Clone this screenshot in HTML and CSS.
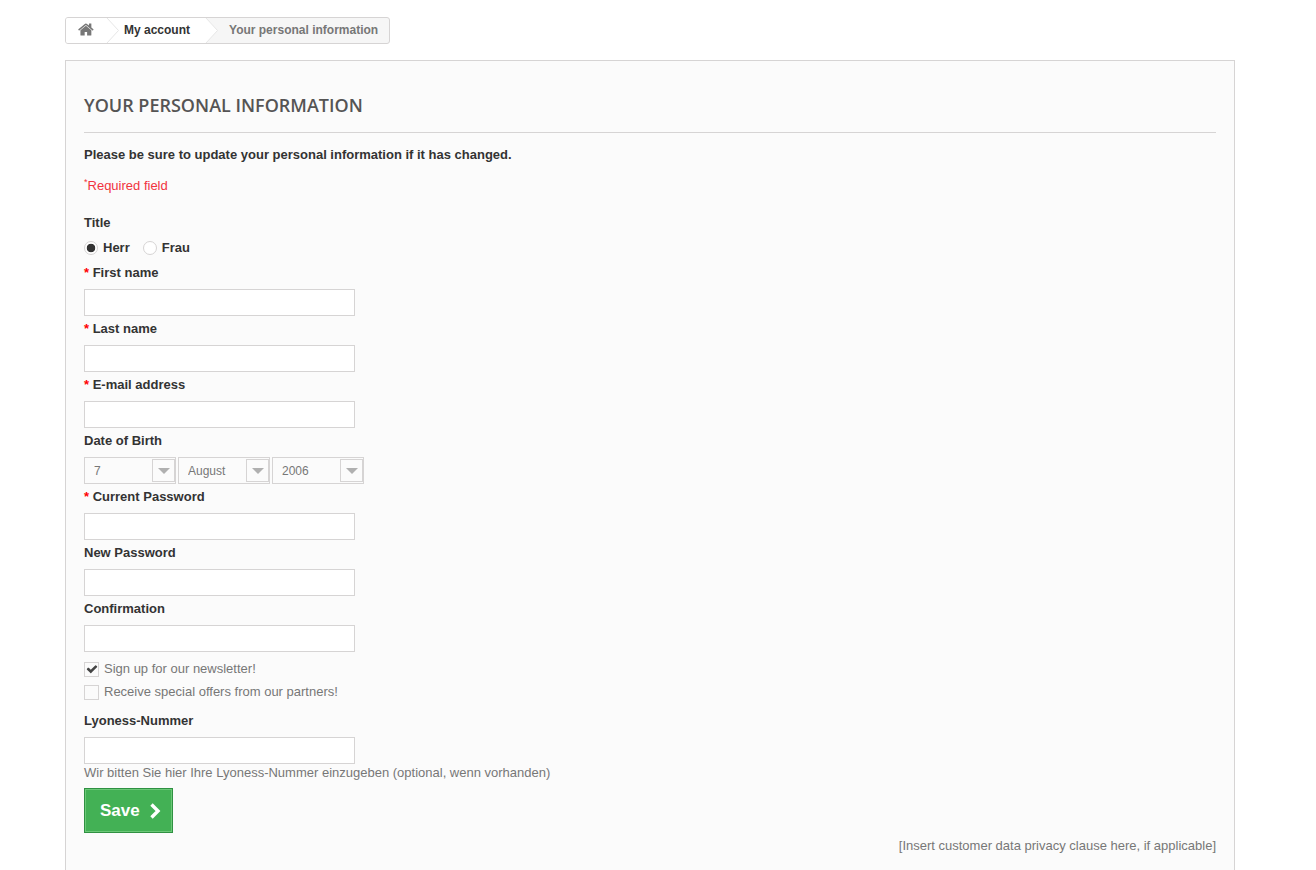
FILE: index.html
```html
<!DOCTYPE html>
<html lang="en">
<head>
    <meta charset="UTF-8">
    <title>Your personal information</title>
    <link rel="stylesheet" href="styles.css">
</head>
<body>
    <div class="page">

        <!-- Breadcrumb -->
        <nav class="breadcrumb">
            <a class="crumb crumb-home" href="#">
                <svg class="home-icon" viewBox="0 0 1792 1792"><path d="M1408 992v480q0 26-19 45t-45 19h-384v-384h-256v384h-384q-26 0-45-19t-19-45v-480q0-1 .5-3t.5-3l575-474 575 474q1 2 1 6zm223-69l-62 74q-8 9-21 11h-3q-13 0-21-7l-692-577-692 577q-12 8-24 7-13-2-21-11l-62-74q-8-10-7-23.5t11-20.5l719-599q32-26 76-26t76 26l244 204v-195q0-14 9-23t23-9h192q14 0 23 9t9 23v408l219 182q10 8 11 20.5t-7 23.5z"/></svg>
            </a>
            <svg class="crumb-sep" viewBox="0 0 13 25"><polygon points="0,0 1,0 12.5,12.5 1,25 0,25" fill="#fff"/><polyline points="1,0 12.5,12.5 1,25" fill="none" stroke="#e6e6e6"/></svg>
            <a class="crumb crumb-link" href="#">My account</a>
            <svg class="crumb-sep sep-last" viewBox="0 0 13 25"><polygon points="0,0 1,0 12.5,12.5 1,25 0,25" fill="#fff"/><polyline points="1,0 12.5,12.5 1,25" fill="none" stroke="#e6e6e6"/></svg>
            <span class="crumb crumb-current">Your personal information</span>
        </nav>

        <!-- Main box -->
        <div class="box">
            <h1 class="page-heading">Your personal information</h1>
            <p class="intro">Please be sure to update your personal information if it has changed.</p>
            <p class="required-note"><sup>*</sup>Required field</p>

            <form class="account-form">
                <div class="title-group">
                    <div class="field-label">Title</div>
                    <div class="radio-row">
                        <label class="radio-option"><span class="radio checked"></span>Herr</label>
                        <label class="radio-option"><span class="radio"></span>Frau</label>
                    </div>
                </div>

                <div class="form-group">
                    <label class="field-label"><span class="req">*</span> First name</label>
                    <input class="text-input" type="text">
                </div>
                <div class="form-group">
                    <label class="field-label"><span class="req">*</span> Last name</label>
                    <input class="text-input" type="text">
                </div>
                <div class="form-group">
                    <label class="field-label"><span class="req">*</span> E-mail address</label>
                    <input class="text-input" type="text">
                </div>

                <div class="form-group">
                    <label class="field-label">Date of Birth</label>
                    <div class="date-row">
                        <div class="select-wrap">
                            <select class="select-input"><option>7</option></select>
                            <span class="select-arrow"></span>
                        </div>
                        <div class="select-wrap">
                            <select class="select-input"><option>August</option></select>
                            <span class="select-arrow"></span>
                        </div>
                        <div class="select-wrap">
                            <select class="select-input"><option>2006</option></select>
                            <span class="select-arrow"></span>
                        </div>
                    </div>
                </div>

                <div class="form-group">
                    <label class="field-label"><span class="req">*</span> Current Password</label>
                    <input class="text-input" type="password">
                </div>
                <div class="form-group">
                    <label class="field-label">New Password</label>
                    <input class="text-input" type="password">
                </div>
                <div class="form-group">
                    <label class="field-label">Confirmation</label>
                    <input class="text-input" type="password">
                </div>

                <div class="check-list">
                    <label class="check-row">
                        <span class="checkbox">
                            <svg class="check-icon" viewBox="0 0 1792 1792"><path d="M1671 566q0 40-28 68l-724 724-136 136q-28 28-68 28t-68-28l-136-136-362-362q-28-28-28-68t28-68l136-136q28-28 68-28t68 28l294 295 656-657q28-28 68-28t68 28l136 136q28 28 28 68z"/></svg>
                        </span>
                        Sign up for our newsletter!
                    </label>
                    <label class="check-row"><span class="checkbox"></span>Receive special offers from our partners!</label>
                </div>

                <div class="form-group lyoness">
                    <label class="field-label">Lyoness-Nummer</label>
                    <input class="text-input" type="text">
                    <div class="help-text">Wir bitten Sie hier Ihre Lyoness-Nummer einzugeben (optional, wenn vorhanden)</div>
                </div>

                <button class="btn-save" type="button">
                    Save
                    <svg class="btn-chevron" viewBox="0 0 12 18"><polyline points="2.5,2.5 9,9 2.5,15.5" fill="none" stroke="#fff" stroke-width="3.4"/></svg>
                </button>

                <p class="privacy">[Insert customer data privacy clause here, if applicable]</p>
            </form>
        </div>
    </div>
</body>
</html>
```

FILE: styles.css
```css
/* General Styling */
html, body {
    height: 870px;
    overflow: hidden;
}

body {
    font-family: "Liberation Sans", Arial, sans-serif;
    font-size: 13px;
    color: #777;
    background-color: #fff;
    margin: 0;
    padding: 0;
}

.page {
    width: 1170px;
    margin-left: 65px;
    padding-top: 17px;
}

/* Breadcrumb */
.breadcrumb {
    display: inline-flex;
    align-items: stretch;
    height: 25px;
    border: 1px solid #d6d4d4;
    border-radius: 3px;
    background-color: #f6f6f6;
    font-size: 12px;
    font-weight: bold;
    line-height: 25px;
    overflow: hidden;
}

.crumb {
    display: block;
    text-decoration: none;
}

.crumb-home {
    display: flex;
    align-items: center;
    width: 40px;
    padding-left: 12px;
    box-sizing: border-box;
    background-color: #fff;
}

.home-icon {
    width: 17px;
    height: 17px;
    margin-top: -3px;
    fill: #777;
}

.crumb-sep {
    width: 13px;
    height: 25px;
    background-color: #fff;
}

.sep-last {
    background-color: #f6f6f6;
}

.crumb-link {
    padding: 0 15px 0 5px;
    color: #333;
    background-color: #fff;
}

.crumb-current {
    padding: 0 11px 0 11px;
    color: #777;
}

/* Main box */
.box {
    box-sizing: border-box;
    height: 810px;
    margin-top: 16px;
    padding: 0 18px;
    background-color: #fbfbfb;
    border: 1px solid #d6d4d4;
    border-bottom: none;
}

.page-heading {
    margin: 0 0 13px;
    padding: 33px 0 15px;
    font-family: "Open Sans", sans-serif;
    font-size: 18px;
    font-weight: 600;
    line-height: 23px;
    text-transform: uppercase;
    color: #555454;
    border-bottom: 1px solid #d6d4d4;
}

.intro {
    margin: 0 0 13px;
    font-weight: bold;
    line-height: 18px;
    color: #333;
}

.required-note {
    margin: 0 0 19px;
    line-height: 18px;
    color: #f13340;
}

.required-note sup {
    font-size: 9px;
    line-height: 0;
}

/* Form */
.field-label {
    display: block;
    font-weight: bold;
    line-height: 18px;
    color: #333;
}

.req {
    color: #f00;
}

.title-group {
    margin-bottom: 7px;
}

.radio-row {
    display: flex;
    gap: 13px;
    margin-top: 7px;
}

.radio-option {
    display: flex;
    align-items: center;
    gap: 5px;
    font-weight: bold;
    line-height: 18px;
    color: #333;
}

.radio {
    box-sizing: border-box;
    width: 14px;
    height: 14px;
    border: 1px solid #d6d4d4;
    border-radius: 50%;
    background-color: #fff;
}

.radio.checked {
    background: radial-gradient(circle, #333 0, #333 4px, #fff 4.6px);
}

.form-group {
    margin-bottom: 4px;
}

.form-group .field-label {
    margin-bottom: 7px;
}

.text-input {
    display: block;
    box-sizing: border-box;
    width: 271px;
    height: 27px;
    padding: 3px 5px;
    background-color: #fff;
    border: 1px solid #d6d4d4;
    border-radius: 0;
    outline: none;
}

.date-row {
    display: flex;
    gap: 2px;
}

.select-wrap {
    position: relative;
    width: 92px;
    height: 27px;
}

.select-input {
    box-sizing: border-box;
    display: block;
    width: 100%;
    height: 100%;
    padding: 0 0 0 9px;
    font-family: inherit;
    font-size: 12px;
    color: #777;
    background-color: #fbfbfb;
    border: 1px solid #d6d4d4;
    border-radius: 0;
    appearance: none;
    -webkit-appearance: none;
}

.select-arrow {
    position: absolute;
    top: 2px;
    right: 1px;
    box-sizing: border-box;
    width: 23px;
    height: 23px;
    background-color: #fbfbfb;
    border: 1px solid #d6d4d4;
}

.select-arrow::after {
    content: "";
    position: absolute;
    top: 8px;
    left: 5px;
    border-top: 6px solid #b0b0b0;
    border-left: 6px solid transparent;
    border-right: 6px solid transparent;
}

/* Checkboxes */
.check-list {
    display: flex;
    flex-direction: column;
    gap: 7px;
    margin-top: 9px;
}

.check-row {
    display: flex;
    align-items: center;
    gap: 5px;
    height: 16px;
    line-height: 16px;
}

.checkbox {
    display: flex;
    align-items: center;
    justify-content: center;
    box-sizing: border-box;
    width: 15px;
    height: 15px;
    border: 1px solid #d6d4d4;
    background-color: #fbfbfb;
}

.check-icon {
    width: 12px;
    height: 12px;
    fill: #444;
}

.lyoness {
    margin-top: 12px;
    margin-bottom: 0;
}

.help-text {
    margin-top: 1px;
    line-height: 16px;
}

/* Save button */
.btn-save {
    display: flex;
    align-items: center;
    gap: 9px;
    box-sizing: border-box;
    width: 89px;
    height: 45px;
    margin-top: 7px;
    padding: 0 0 0 15px;
    font-family: inherit;
    font-size: 17px;
    font-weight: bold;
    color: #fff;
    background-color: #43b155;
    border: 1px solid #2f9142;
    box-shadow: inset 0 0 0 1px #6cc878;
    cursor: pointer;
}

.btn-chevron {
    width: 12px;
    height: 18px;
}

.privacy {
    margin: 4px 0 0;
    line-height: 18px;
    text-align: right;
}
```
